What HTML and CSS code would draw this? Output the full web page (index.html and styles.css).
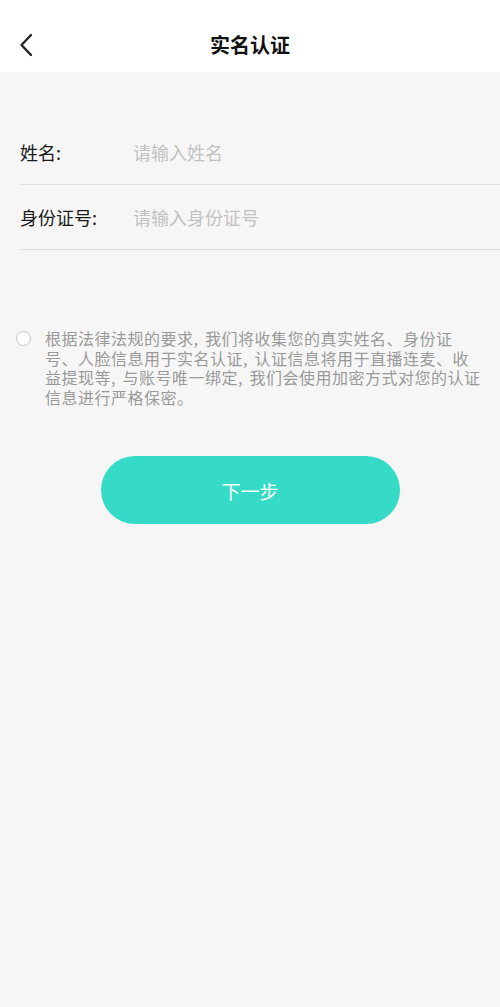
FILE: index.html
```html
<!DOCTYPE html>
<html lang="zh-CN">
<head>
<meta charset="utf-8">
<title>实名认证</title>
<link rel="stylesheet" href="styles.css">
</head>
<body>
<header class="topbar">
  <button class="back" type="button" aria-label="返回">
    <svg width="14" height="24" viewBox="0 0 14 24"><path d="M12 2 L2.5 12 L12 22" fill="none" stroke="#222" stroke-width="2.4" stroke-linecap="round" stroke-linejoin="round"/></svg>
  </button>
  <h1 class="title">实名认证</h1>
  <span class="spacer"></span>
</header>

<main class="content">
  <section class="form">
    <label class="row">
      <span class="label">姓名:</span>
      <input class="field" type="text" placeholder="请输入姓名">
    </label>
    <label class="row">
      <span class="label">身份证号:</span>
      <input class="field" type="text" placeholder="请输入身份证号">
    </label>
  </section>

  <section class="agree">
    <span class="radio"></span>
    <p class="notice">根据法律法规的要求, 我们将收集您的真实姓名、身份证号、人脸信息用于实名认证, 认证信息将用于直播连麦、收益提现等, 与账号唯一绑定, 我们会使用加密方式对您的认证信息进行严格保密。</p>
  </section>

  <div class="actions">
    <button class="next" type="button">下一步</button>
  </div>
</main>
</body>
</html>
```

FILE: styles.css
```css
html, body {
  margin: 0;
  padding: 0;
}

body {
  width: 500px;
  min-height: 1007px;
  background: #f6f6f6;
  font-family: "Noto Sans CJK SC", "Noto Sans", sans-serif;
  color: #222;
}

.topbar {
  height: 54px;
  padding-top: 18px;
  background: #fff;
  display: grid;
  grid-template-columns: 1fr auto 1fr;
  align-items: center;
}

.back {
  justify-self: start;
  margin-left: 19px;
  padding: 0;
  border: 0;
  background: none;
  display: flex;
  align-items: center;
  height: 24px;
}

.title {
  margin: 0;
  font-size: 20px;
  font-weight: 600;
  color: #111;
  line-height: 28px;
}

.form {
  padding-top: 48px;
}

.row {
  display: flex;
  align-items: center;
  height: 64px;
  margin-left: 20px;
  border-bottom: 1px solid #e0e0e0;
}

.label {
  width: 113px;
  flex: none;
  font-size: 18px;
  color: #1a1a1a;
}

.field {
  flex: 1;
  min-width: 0;
  border: 0;
  outline: none;
  background: transparent;
  padding: 0;
  font-family: inherit;
  font-size: 18px;
  color: #222;
}

.field::placeholder {
  color: #c2c2c2;
}

.agree {
  display: flex;
  align-items: flex-start;
  gap: 14px;
  margin-top: 79px;
  padding-left: 16px;
  padding-right: 18px;
}

.radio {
  flex: none;
  width: 13px;
  height: 13px;
  margin-top: 1.5px;
  border: 1px solid #c6c6c6;
  border-radius: 50%;
  background: #fff;
}

.notice {
  margin: 0;
  font-size: 16px;
  line-height: 19.6px;
  letter-spacing: 0.5px;
  word-spacing: 2.5px;
  color: #9a9a9a;
}

.actions {
  display: flex;
  justify-content: center;
  margin-top: 49px;
}

.next {
  width: 299px;
  height: 68px;
  border: 0;
  border-radius: 34px;
  background: #35dbc6;
  color: #fff;
  font-family: inherit;
  font-size: 19px;
}
```
